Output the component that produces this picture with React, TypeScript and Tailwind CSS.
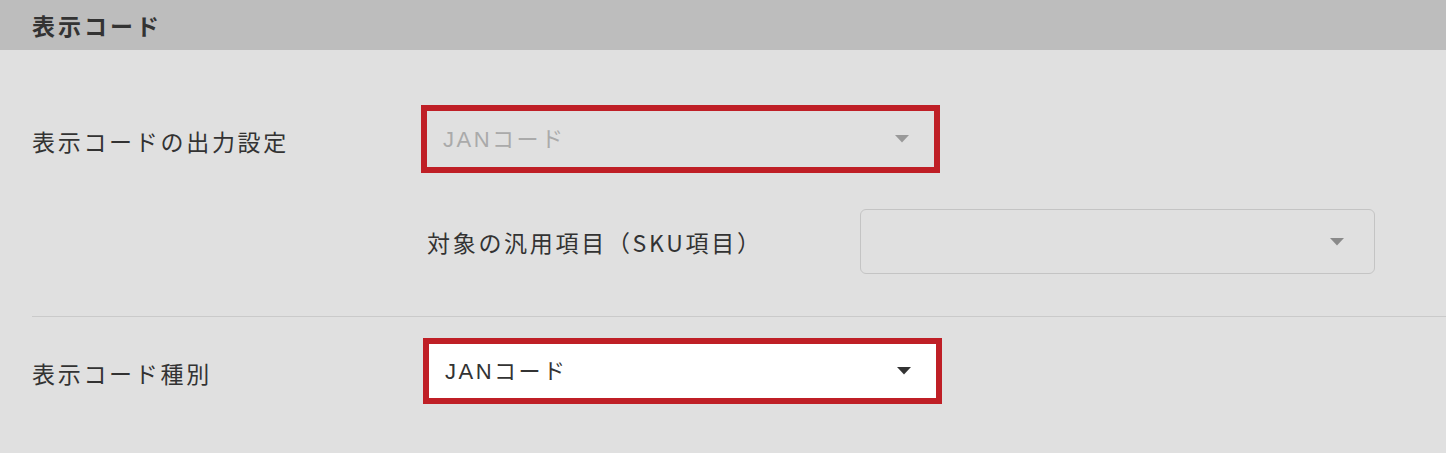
import React from 'react';

const labelFont = { fontFamily: '"Noto Sans CJK JP", "Noto Sans", sans-serif' };
const selectFont = { fontFamily: '"Liberation Sans", "Noto Sans CJK JP", sans-serif' };

const Caret: React.FC<{ color: string }> = ({ color }) => (
    <svg width="14" height="8" viewBox="0 0 14 8" className="shrink-0">
        <path d="M0 0 H14 L7 7.5 Z" fill={color} />
    </svg>
);

export default function App() {
    return (
        <div className="w-[1446px] h-[453px] bg-[#e0e0e0] overflow-hidden text-[#333]" style={labelFont}>
            {/* Section header */}
            <div className="h-[50px] bg-[#bdbdbd] flex items-center pl-[32px]">
                <h2 className="text-[23px] font-bold tracking-[3px] text-[#333]">表示コード</h2>
            </div>

            <div className="pl-[32px]">
                {/* Output setting */}
                <div className="flex items-center mt-[55px]">
                    <div className="w-[389px] text-[23px] tracking-[2.7px] pt-[4px]">表示コードの出力設定</div>
                    <div className="w-[519px] h-[68px] border-[6px] border-[#bf1f26] bg-[#e0e0e0] flex items-center justify-between pl-[16px] pr-[25px]">
                        <span className="text-[22px] tracking-[2.5px] text-[#aaa]" style={selectFont}>JANコード</span>
                        <Caret color="#999" />
                    </div>
                </div>

                {/* Target generic item */}
                <div className="flex items-center mt-[36px] pl-[395px]">
                    <div className="w-[433px] text-[23px] tracking-[2.7px] pt-[2px]">対象の汎用項目（SKU項目）</div>
                    <div className="w-[515px] h-[65px] rounded-[6px] border border-[#c4c4c4] bg-[#e0e0e0] flex items-center justify-end pr-[30px]">
                        <Caret color="#8a8a8a" />
                    </div>
                </div>

                <div className="mt-[42px] h-px bg-[#cacaca]" />

                {/* Display code type */}
                <div className="flex items-center mt-[21px]">
                    <div className="w-[391px] text-[23px] tracking-[2.7px] pt-[4px]">表示コード種別</div>
                    <div className="w-[519px] h-[66px] border-[6px] border-[#bf1f26] bg-white flex items-center justify-between pl-[16px] pr-[25px]">
                        <span className="text-[22px] tracking-[2.5px] text-[#333]" style={selectFont}>JANコード</span>
                        <Caret color="#333" />
                    </div>
                </div>
            </div>
        </div>
    );
}
